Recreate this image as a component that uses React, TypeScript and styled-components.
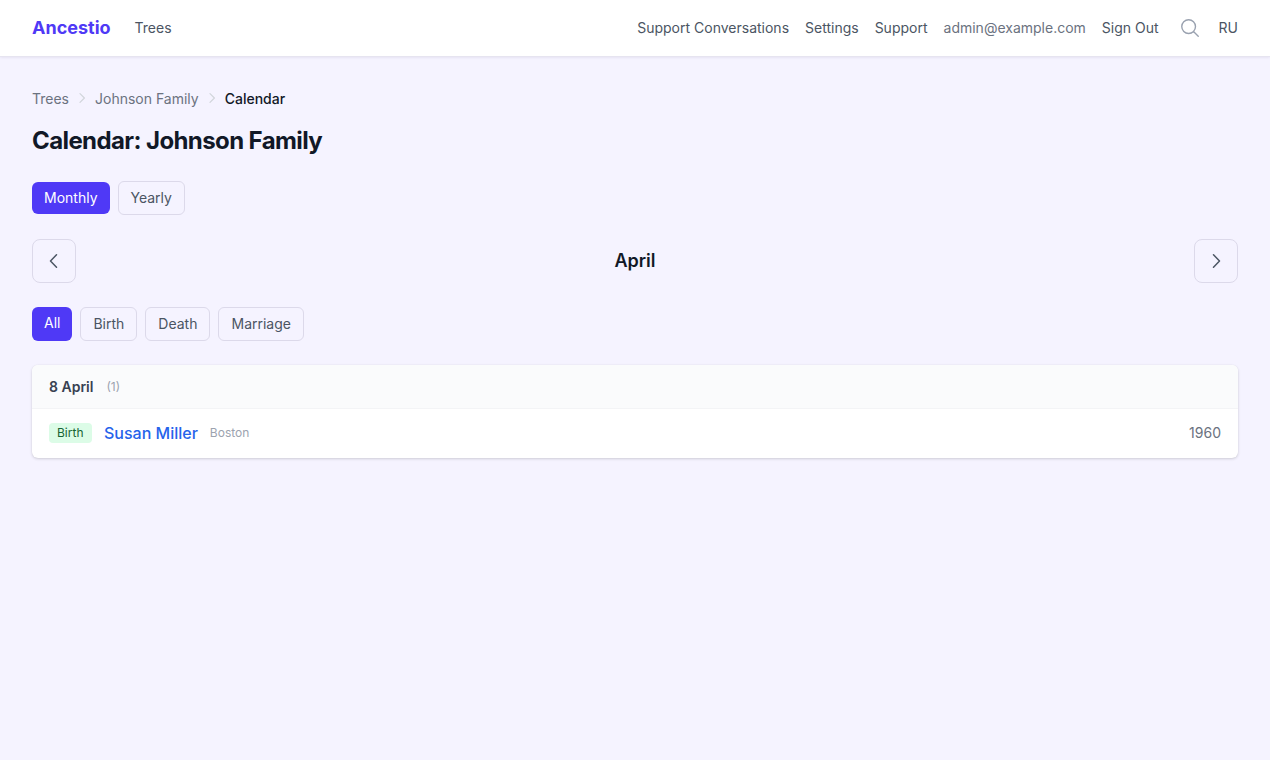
import * as React from 'react';
import styled, { createGlobalStyle } from 'styled-components';

const GlobalStyle = createGlobalStyle`
  html, body {
    margin: 0;
    padding: 0;
    min-height: 100%;
    background: #f5f3ff;
    font-family: Inter, 'Liberation Sans', sans-serif;
    color: #111827;
  }
  * {
    box-sizing: border-box;
  }
`;

export default function App() {
  return (
    <>
      <GlobalStyle />
      <Page>
        <Header>
          <HeaderLeft>
            <Logo>Ancestio</Logo>
            <NavLink>Trees</NavLink>
          </HeaderLeft>
          <HeaderRight>
            <NavLink>Support Conversations</NavLink>
            <NavLink>Settings</NavLink>
            <NavLink>Support</NavLink>
            <UserEmail>admin@example.com</UserEmail>
            <NavLink>Sign Out</NavLink>
            <SearchIcon viewBox="0 0 24 24" fill="none" stroke="currentColor" strokeWidth="1.5">
              <path
                d="m21 21-5.197-5.197m0 0A7.5 7.5 0 1 0 5.196 5.196a7.5 7.5 0 0 0 10.607 10.607Z"
                strokeLinecap="round"
                strokeLinejoin="round"
              />
            </SearchIcon>
            <NavLink>RU</NavLink>
          </HeaderRight>
        </Header>
        <Main>
          <Breadcrumbs>
            <Crumb>Trees</Crumb>
            <Chevron />
            <Crumb>Johnson Family</Crumb>
            <Chevron />
            <Crumb $current>Calendar</Crumb>
          </Breadcrumbs>
          <Title>Calendar: Johnson Family</Title>
          <ViewTabs>
            <Pill $active>Monthly</Pill>
            <Pill>Yearly</Pill>
          </ViewTabs>
          <MonthRow>
            <ArrowButton aria-label="Previous month">
              <svg width="20" height="20" viewBox="0 0 20 20" fill="none" stroke="currentColor" strokeWidth="1.5">
                <path d="M12.5 3.8 6.5 10l6 6.2" strokeLinecap="round" strokeLinejoin="round" />
              </svg>
            </ArrowButton>
            <MonthName>April</MonthName>
            <ArrowButton aria-label="Next month">
              <svg width="20" height="20" viewBox="0 0 20 20" fill="none" stroke="currentColor" strokeWidth="1.5">
                <path d="M7.5 3.8 13.5 10l-6 6.2" strokeLinecap="round" strokeLinejoin="round" />
              </svg>
            </ArrowButton>
          </MonthRow>
          <FilterRow>
            <Pill $active $tall>All</Pill>
            <Pill>Birth</Pill>
            <Pill>Death</Pill>
            <Pill>Marriage</Pill>
          </FilterRow>
          <EventCard>
            <DayHeader>
              <DayLabel>8 April</DayLabel>
              <DayCount>(1)</DayCount>
            </DayHeader>
            <EventRow>
              <Badge>Birth</Badge>
              <PersonLink>Susan Miller</PersonLink>
              <Place>Boston</Place>
              <Year>1960</Year>
            </EventRow>
          </EventCard>
        </Main>
      </Page>
    </>
  );
}

function Chevron() {
  return (
    <ChevronIcon viewBox="0 0 20 20" fill="none" stroke="currentColor" strokeWidth="1.5">
      <path d="M7.5 4.5 13 10l-5.5 5.5" strokeLinecap="round" strokeLinejoin="round" />
    </ChevronIcon>
  );
}

const Page = styled.div`
  min-height: 760px;
  background: #f5f3ff;
`;

const Header = styled.header`
  display: flex;
  align-items: center;
  justify-content: space-between;
  height: 56px;
  padding: 0 32px 2px;
  background: #fff;
  box-shadow: 0 1px 0 #e6e4f0, 0 1px 3px rgba(30, 20, 80, 0.12);
`;

const HeaderLeft = styled.div`
  display: flex;
  align-items: center;
  gap: 24px;
`;

const HeaderRight = styled.nav`
  display: flex;
  align-items: center;
  gap: 16px;
`;

const Logo = styled.span`
  font-size: 18px;
  font-weight: 700;
  color: #4f39f6;
`;

const NavLink = styled.span`
  font-size: 14px;
  color: #4b5563;
`;

const UserEmail = styled.span`
  font-size: 14px;
  color: #6b7280;
`;

const SearchIcon = styled.svg`
  width: 22px;
  height: 22px;
  margin: 2px 2px 0 4px;
  color: #99a1af;
`;

const Main = styled.main`
  padding: 32px 32px 0;
`;

const Breadcrumbs = styled.div`
  display: flex;
  align-items: center;
  gap: 5px;
  height: 20px;
`;

const Crumb = styled.span<{ $current?: boolean }>`
  font-size: 14px;
  font-weight: ${(p) => (p.$current ? 500 : 400)};
  color: ${(p) => (p.$current ? '#111827' : '#6b7280')};
`;

const ChevronIcon = styled.svg`
  width: 16px;
  height: 16px;
  color: #d1d5db;
`;

const Title = styled.h1`
  margin: 17px 0 0;
  font-size: 24px;
  line-height: 32px;
  font-weight: 700;
  letter-spacing: -0.6px;
  color: #111827;
`;

const ViewTabs = styled.div`
  display: flex;
  align-items: center;
  gap: 8px;
  margin-top: 24px;
`;

const FilterRow = styled.div`
  display: flex;
  align-items: center;
  gap: 8px;
  margin-top: 24px;
`;

const Pill = styled.button<{ $active?: boolean; $tall?: boolean }>`
  height: ${(p) => (p.$active && !p.$tall ? '32px' : '34px')};
  padding: 0 12px ${(p) => (p.$tall ? '3px' : '1px')};
  border: ${(p) => (p.$active ? 'none' : '1px solid #dcd9ea')};
  border-radius: 6px;
  background: ${(p) => (p.$active ? '#4f39f6' : 'transparent')};
  color: ${(p) => (p.$active ? '#fff' : '#4b5563')};
  font-family: inherit;
  font-size: 14px;
`;

const MonthRow = styled.div`
  display: flex;
  align-items: center;
  justify-content: space-between;
  margin-top: 24px;
`;

const ArrowButton = styled.button`
  display: flex;
  align-items: center;
  justify-content: center;
  width: 44px;
  height: 44px;
  padding: 0;
  border: 1px solid #dcd9ea;
  border-radius: 8px;
  background: transparent;
  color: #4b5563;
`;

const MonthName = styled.h2`
  margin: 0;
  font-size: 18px;
  line-height: 28px;
  font-weight: 600;
  color: #111827;
`;

const EventCard = styled.section`
  margin-top: 24px;
  background: #fff;
  border-radius: 6px;
  overflow: hidden;
  box-shadow: 0 1px 3px rgba(0, 0, 0, 0.16), 0 0 1px rgba(0, 0, 0, 0.08);
`;

const DayHeader = styled.div`
  display: flex;
  align-items: center;
  gap: 13px;
  height: 44px;
  padding: 0 17px;
  background: #fafbfc;
  border-bottom: 1px solid #f3f4f6;
`;

const DayLabel = styled.span`
  font-size: 14px;
  font-weight: 600;
  color: #374151;
`;

const DayCount = styled.span`
  font-size: 12px;
  color: #9ca3af;
`;

const EventRow = styled.div`
  display: flex;
  align-items: center;
  height: 49px;
  padding: 0 17px 1px;
`;

const Badge = styled.span`
  padding: 2px 8.5px 2px 8px;
  border-radius: 4px;
  background: #dcfce7;
  color: #166534;
  font-size: 12px;
  line-height: 16px;
`;

const PersonLink = styled.span`
  margin-left: 12px;
  font-size: 16px;
  font-weight: 500;
  color: #2563eb;
`;

const Place = styled.span`
  margin: 0 0 1px 12px;
  font-size: 12px;
  color: #9ca3af;
`;

const Year = styled.span`
  margin: 0 0 1px auto;
  font-size: 14px;
  color: #6b7280;
`;
